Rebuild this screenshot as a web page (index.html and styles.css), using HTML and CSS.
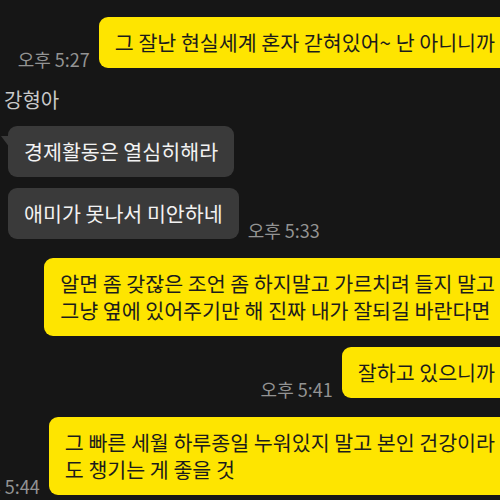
FILE: index.html
```html
<html>
<head>
    <title>채팅</title>
    <link rel="stylesheet" href="styles.css">
</head>
<body>
    <div class="chat">
        <div class="row mine first">
            <span class="time">오후 5:27</span>
            <div class="bubble yellow">그 잘난 현실세계 혼자 갇혀있어~ 난 아니니까</div>
        </div>

        <div class="name">강형아</div>

        <div class="row other">
            <div class="bubble gray tail">경제활동은 열심히해라</div>
        </div>
        <div class="row other">
            <div class="bubble gray">애미가 못나서 미안하네</div>
            <span class="time">오후 5:33</span>
        </div>

        <div class="row mine wide">
            <div class="bubble yellow">알면 좀 갖잖은 조언 좀 하지말고 가르치려 들지 말고<br>그냥 옆에 있어주기만 해 진짜 내가 잘되길 바란다면</div>
        </div>
        <div class="row mine">
            <span class="time">오후 5:41</span>
            <div class="bubble yellow">잘하고 있으니까</div>
        </div>
        <div class="row mine wide">
            <span class="time">오후 5:44</span>
            <div class="bubble yellow">그 빠른 세월 하루종일 누워있지 말고 본인 건강이라<br>도 챙기는 게 좋을 것</div>
        </div>
    </div>
</body>
</html>
```

FILE: styles.css
```css
body {
    margin: 0;
    background-color: #161616;
    font-family: 'Noto Sans CJK KR', 'Noto Sans', sans-serif;
    overflow: hidden;
}

.chat {
    display: flex;
    flex-direction: column;
    width: 551px;
    margin-left: -40px; /* screenshot is cropped on both sides */
    padding-top: 17px;
}

.row {
    display: flex;
    align-items: flex-end;
    gap: 9px;
    margin-top: 11px;
}

.row.first {
    margin-top: 0;
}

.row.wide {
    margin-top: 19px;
}

.mine {
    justify-content: flex-end;
}

.other {
    padding-left: 48px;
}

.bubble {
    position: relative;
    padding: 12px 16px;
    font-size: 20.6px;
    line-height: 27px;
    border-radius: 9px;
    white-space: nowrap;
}

.yellow {
    background-color: #fee500;
    color: #1c1c1c;
}

.gray {
    background-color: #3a3a3a;
    color: #f2f2f2;
}

/* little speech tail on the first message of a group */
.tail::before {
    content: '';
    position: absolute;
    left: -7px;
    top: 10px;
    width: 9px;
    height: 12px;
    background-color: #3a3a3a;
    clip-path: polygon(100% 0, 0 0, 100% 100%);
}

.time {
    font-size: 18px;
    line-height: 18px;
    color: #939393;
    white-space: nowrap;
}

.name {
    margin: 20px 0 0 44px;
    font-size: 20px;
    line-height: 24px;
    color: #c9c9c9;
}

.name + .row {
    margin-top: 14px;
}
```
